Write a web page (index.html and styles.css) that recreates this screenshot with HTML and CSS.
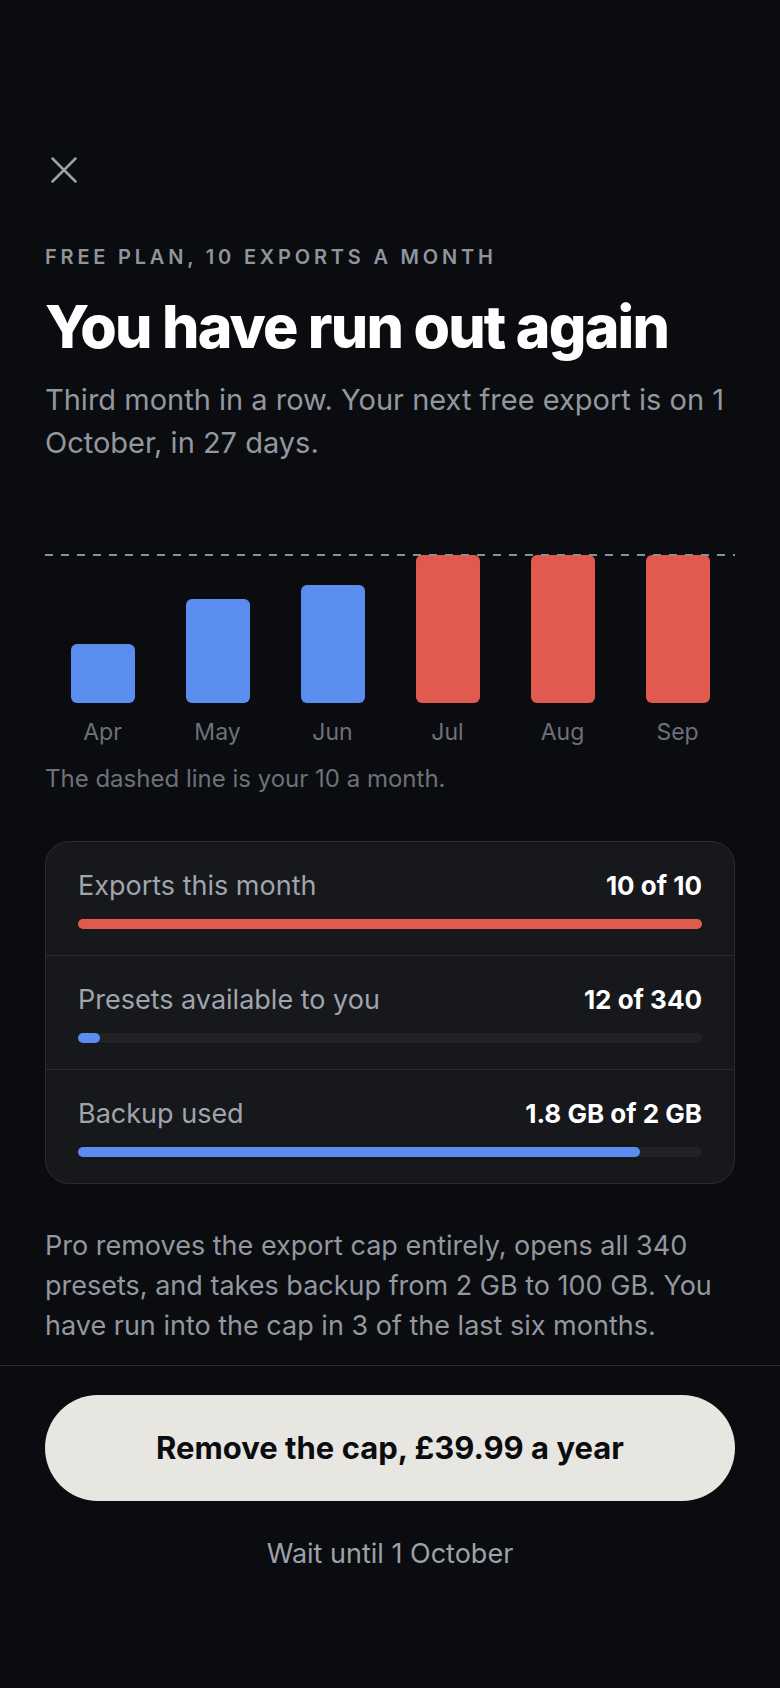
FILE: index.html
```html
<!DOCTYPE html>
<html lang="en">
<head>
  <meta charset="UTF-8">
  <meta name="viewport" content="width=device-width, initial-scale=1.0">
  <title>Export limit reached</title>
  <link rel="stylesheet" href="styles.css">
</head>
<body>
  <main class="sheet">
    <button class="close-button" aria-label="Close">
      <svg width="26" height="26" viewBox="0 0 26 26" fill="none" stroke="currentColor" stroke-width="2.5" stroke-linecap="round">
        <line x1="1.5" y1="1.5" x2="24.5" y2="24.5"/>
        <line x1="24.5" y1="1.5" x2="1.5" y2="24.5"/>
      </svg>
    </button>

    <p class="eyebrow">Free plan, 10 exports a month</p>
    <h1>You have run out again</h1>
    <p class="lead">Third month in a row. Your next free export is on 1 October, in 27 days.</p>

    <div class="chart">
      <div class="plot">
        <div class="limit-line"></div>
        <div class="col"><div class="bar" style="height: 40%"></div></div>
        <div class="col"><div class="bar" style="height: 70%"></div></div>
        <div class="col"><div class="bar" style="height: 80%"></div></div>
        <div class="col"><div class="bar over" style="height: 100%"></div></div>
        <div class="col"><div class="bar over" style="height: 100%"></div></div>
        <div class="col"><div class="bar over" style="height: 100%"></div></div>
      </div>
      <div class="months">
        <span>Apr</span><span>May</span><span>Jun</span><span>Jul</span><span>Aug</span><span>Sep</span>
      </div>
    </div>
    <p class="caption">The dashed line is your 10 a month.</p>

    <div class="usage">
      <div class="usage-row">
        <div class="usage-head">
          <span class="usage-label">Exports this month</span>
          <span class="usage-value">10 of 10</span>
        </div>
        <div class="track"><div class="fill red" style="width: 100%"></div></div>
      </div>
      <div class="usage-row">
        <div class="usage-head">
          <span class="usage-label">Presets available to you</span>
          <span class="usage-value">12 of 340</span>
        </div>
        <div class="track"><div class="fill" style="width: 3.5%"></div></div>
      </div>
      <div class="usage-row">
        <div class="usage-head">
          <span class="usage-label">Backup used</span>
          <span class="usage-value">1.8 GB of 2 GB</span>
        </div>
        <div class="track"><div class="fill" style="width: 90%"></div></div>
      </div>
    </div>

    <p class="pitch">Pro removes the export cap entirely, opens all 340 presets, and takes backup from 2 GB to 100 GB. You have run into the cap in 3 of the last six months.</p>
  </main>

  <footer class="actions">
    <button class="upgrade-button">Remove the cap, £39.99 a year</button>
    <button class="wait-button">Wait until 1 October</button>
  </footer>
</body>
</html>
```

FILE: styles.css
```css
body {
  margin: 0;
  background: #0b0c0f;
  color: #ffffff;
  font-family: Inter, "Noto Sans", Arial, sans-serif;
}
button {
  font-family: inherit;
  border: none;
  cursor: pointer;
}
.sheet {
  padding: 151px 45px 19px;
}
.close-button {
  display: block;
  padding: 6px;
  margin: 0;
  background: none;
  color: #9ba0a9;
  line-height: 0;
}
.eyebrow {
  margin: 56px 0 0;
  font-size: 20px;
  line-height: 24px;
  font-weight: 600;
  letter-spacing: 0.19em;
  text-transform: uppercase;
  color: #8f949d;
}
h1 {
  margin: 25px 0 0;
  font-size: 59px;
  line-height: 66px;
  font-weight: 800;
  letter-spacing: -0.03em;
}
.lead {
  margin: 18px 0 0;
  font-size: 29px;
  line-height: 43px;
  color: #9297a0;
}
.chart {
  margin-top: 91px;
}
.plot {
  position: relative;
  height: 148px;
  display: grid;
  grid-template-columns: repeat(6, 1fr);
  align-items: end;
}
.limit-line {
  position: absolute;
  left: 0;
  right: 0;
  top: -1px;
  height: 2px;
  background: repeating-linear-gradient(90deg, #8a8e96 0 8px, transparent 8px 16px);
  z-index: 1;
}
.col {
  height: 100%;
  display: flex;
  align-items: flex-end;
  justify-content: center;
}
.bar {
  width: 64px;
  border-radius: 6px;
  background: #5b8def;
}
.bar.over {
  background: #e05a4f;
}
.months {
  display: grid;
  grid-template-columns: repeat(6, 1fr);
  margin-top: 15px;
  text-align: center;
  font-size: 23px;
  line-height: 28px;
  color: #6c717a;
}
.caption {
  margin: 16px 0 0;
  font-size: 24px;
  line-height: 34px;
  color: #6c717a;
}
.usage {
  margin-top: 45px;
  background: #16181c;
  border: 1px solid #2a2c31;
  border-radius: 24px;
  overflow: hidden;
}
.usage-row {
  padding: 27px 32px 26px;
}
.usage-row + .usage-row {
  border-top: 1px solid #2a2c31;
}
.usage-head {
  display: flex;
  justify-content: space-between;
  align-items: baseline;
  font-size: 27px;
  line-height: 34px;
}
.usage-label {
  color: #a0a4ad;
}
.usage-value {
  font-size: 26px;
  font-weight: 700;
  color: #ffffff;
}
.track {
  margin-top: 16px;
  height: 10px;
  border-radius: 5px;
  background: #202227;
}
.fill {
  height: 100%;
  border-radius: 5px;
  background: #5b8def;
}
.fill.red {
  background: #e05a4f;
}
.pitch {
  margin: 42px 0 0;
  font-size: 27px;
  line-height: 40px;
  color: #9297a0;
}
.actions {
  border-top: 1px solid #2a2c31;
  padding: 29px 45px 40px;
  display: flex;
  flex-direction: column;
  align-items: stretch;
}
.upgrade-button {
  padding: 36px 20px;
  border-radius: 53px;
  background: #e8e6e1;
  color: #0b0c0f;
  font-size: 31px;
  line-height: 34px;
  font-weight: 700;
}
.wait-button {
  margin-top: 36px;
  padding: 0;
  background: none;
  color: #9ca1ab;
  font-size: 27px;
  line-height: 34px;
}
```
